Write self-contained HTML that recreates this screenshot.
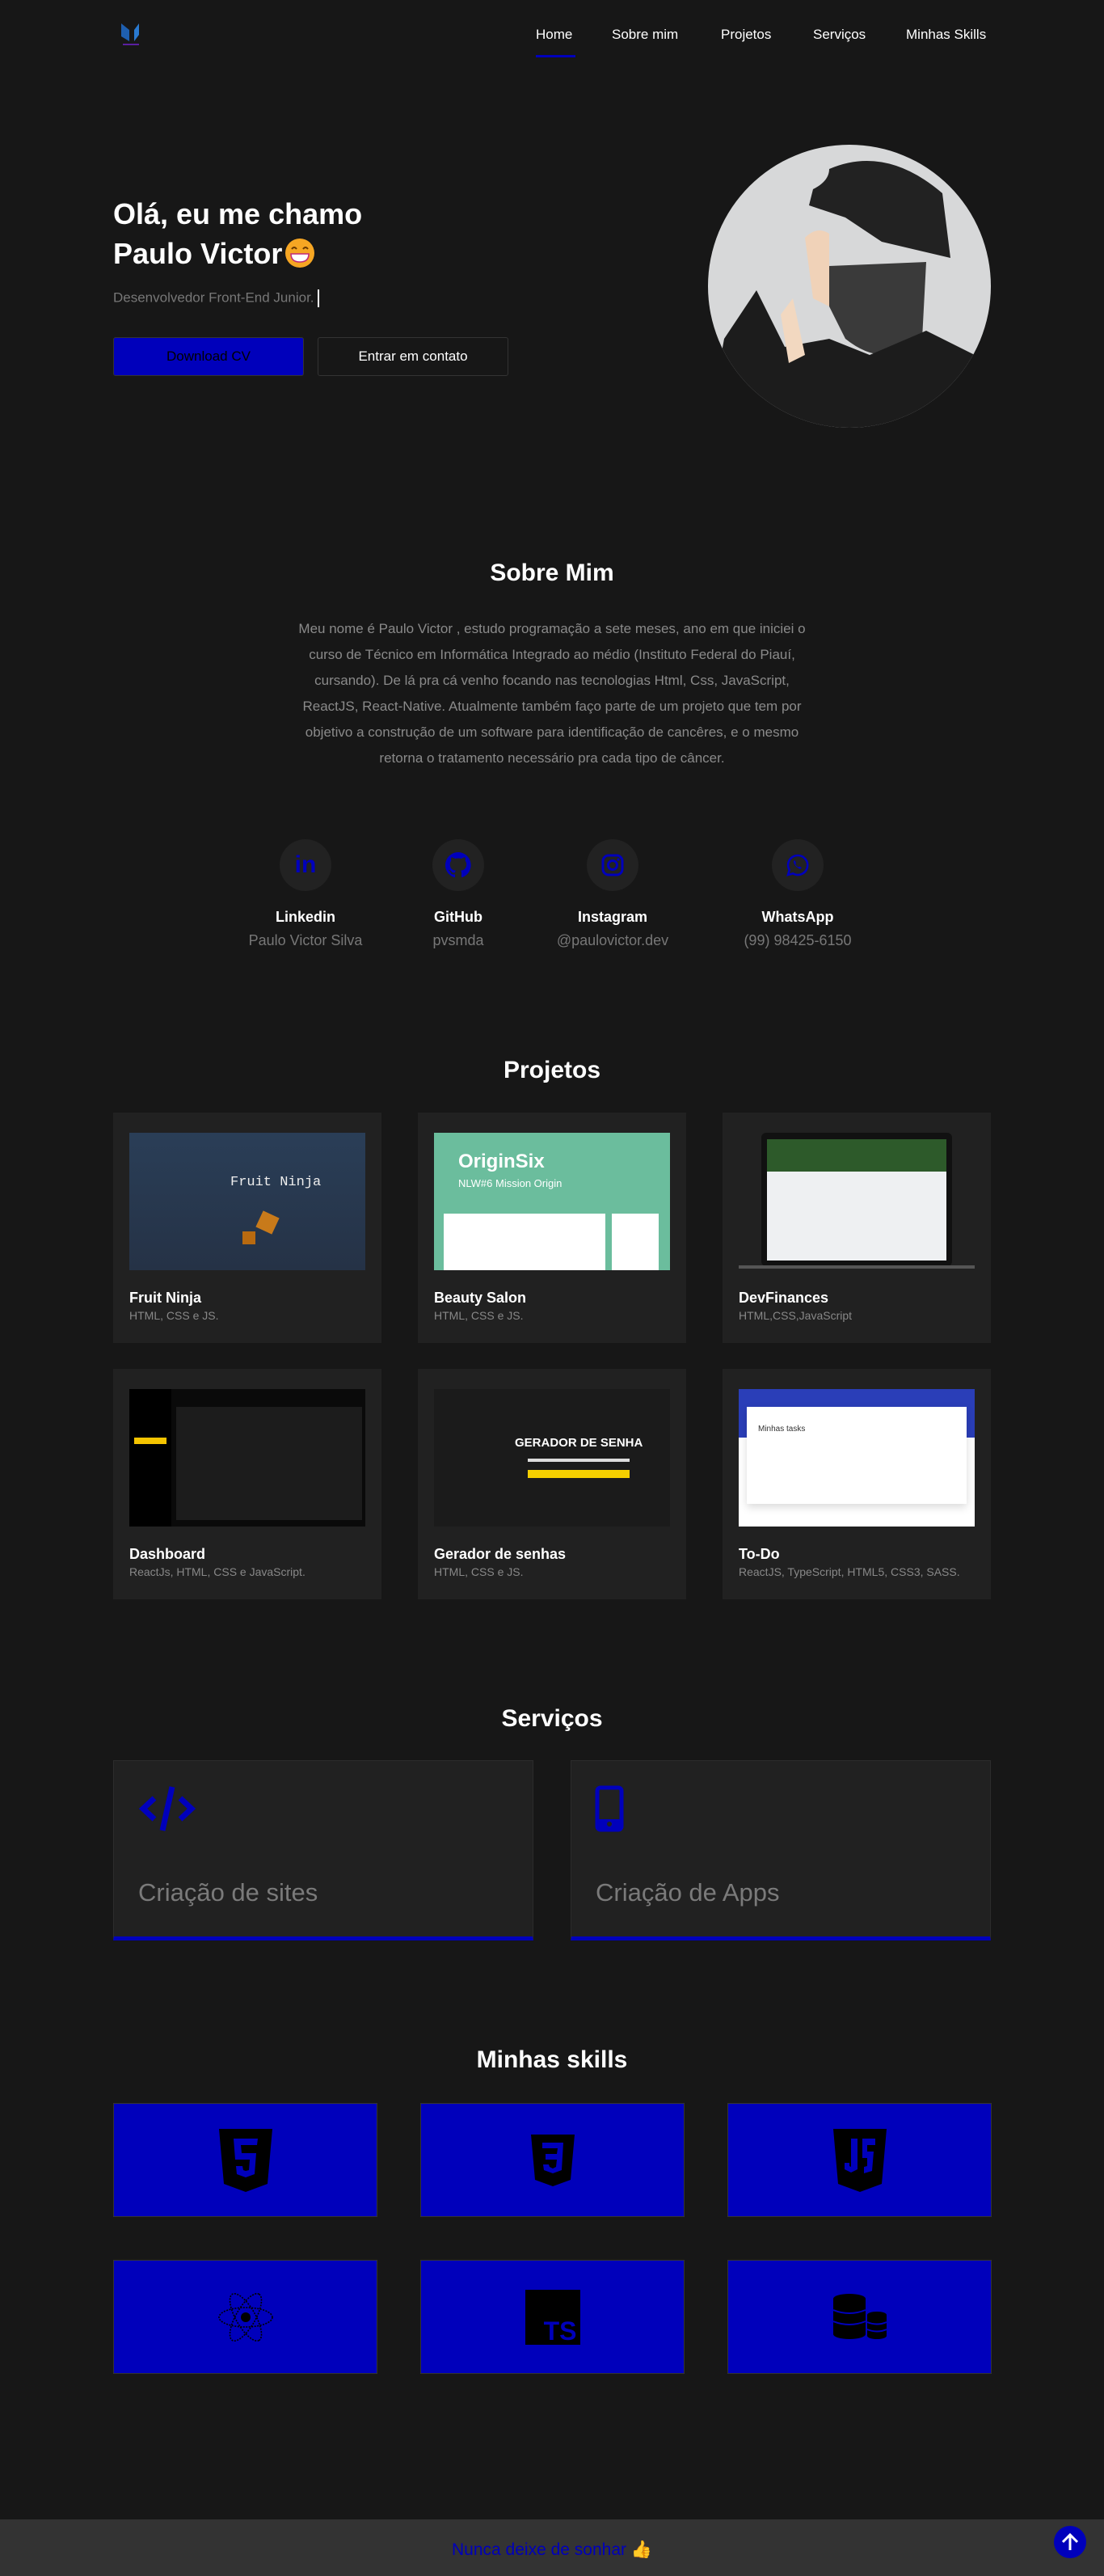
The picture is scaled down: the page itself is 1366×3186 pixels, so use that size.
<!DOCTYPE html>
<html><head><meta charset="utf-8">
<style>
*{margin:0;padding:0;box-sizing:border-box}
body{width:1366px;height:3186px;background:#171717;font-family:"Liberation Sans",sans-serif;color:#fff;position:relative;overflow:hidden}
.abs{position:absolute}
.nav a{position:absolute;top:33px;font-size:17px;color:#fff;text-decoration:none}
h2{position:absolute;left:0;width:1366px;text-align:center;font-size:30px;font-weight:bold}
.card{position:absolute;background:#212121;width:332px;height:285px}
.card .img{position:absolute;left:20px;top:25px;width:292px;height:170px;overflow:hidden}
.card .t{position:absolute;left:20px;top:219px;font-size:18px;font-weight:bold}
.card .s{position:absolute;left:20px;top:243px;font-size:14px;color:#888}
.soc{position:absolute;width:200px;text-align:center}
.soc .c{width:64px;height:64px;border-radius:50%;background:#222;margin:0 auto;display:flex;align-items:center;justify-content:center}
.soc .l{font-weight:bold;font-size:18px;margin-top:22px}
.soc .v{color:#777;font-size:18px;margin-top:8px}
.svc{position:absolute;top:2177px;width:520px;height:223px;background:#212121;border:1px solid #2c2c2c;border-bottom:5px solid #0000bb}
.svc .tx{position:absolute;left:30px;top:145px;font-size:31px;color:#7a7a7a}
.sk{position:absolute;width:327px;height:141px;background:#0000bb;border:1px solid #333;display:flex;align-items:center;justify-content:center}
</style></head><body>

<svg class="abs" style="left:148px;top:27px" width="30" height="32" viewBox="0 0 30 32"><path d="M2 2 L12 10 L12 24 L2 18Z" fill="#1e5fb0"/><path d="M24 2 L18 10 L18 24 L24 16Z" fill="#2a7ad0"/><rect x="4" y="27" width="20" height="2" fill="#5a1fa0"/></svg>
<div class="nav">
<a style="left:663px">Home</a>
<a style="left:757px">Sobre mim</a>
<a style="left:892px">Projetos</a>
<a style="left:1006px">Serviços</a>
<a style="left:1121px">Minhas Skills</a>
</div>
<div class="abs" style="left:663px;top:68px;width:49px;height:3px;background:#0000bb"></div>

<div class="abs" style="left:140px;top:240px;font-size:36px;font-weight:bold;line-height:49px">Olá, eu me chamo<br>Paulo Victor<svg width="38" height="38" viewBox="0 0 38 38" style="vertical-align:-6px;margin-left:3px"><circle cx="19" cy="19" r="18" fill="#f6a623"/><path d="M9 14q3-4 6 0M23 14q3-4 6 0" stroke="#6b3a00" stroke-width="2" fill="none"/><path d="M8 20h22q0 10-11 10T8 20z" fill="#fff" stroke="#c0287a" stroke-width="1.5"/></svg></div>
<div class="abs" style="left:140px;top:358px;font-size:17px;color:#777">Desenvolvedor Front-End Junior. <span style="display:inline-block;width:2px;height:22px;background:#fff;vertical-align:middle"></span></div>
<div class="abs" style="left:140px;top:417px;width:236px;height:48px;background:#0000bb;border:1px solid #333;border-radius:3px;color:#000;font-size:17px;text-align:center;line-height:46px">Download CV</div>
<div class="abs" style="left:393px;top:417px;width:236px;height:48px;border:1px solid #333;border-radius:3px;font-size:17px;text-align:center;line-height:46px">Entrar em contato</div>
<div class="abs" style="left:876px;top:179px;width:350px;height:350px;border-radius:50%;background:#d7d8d9;overflow:hidden">
 <svg width="350" height="350" viewBox="0 0 350 350"><path d="M150 30 Q220 0 290 60 L300 140 L215 120 L170 90 L125 75 L130 55 Q150 45 150 30Z" fill="#222"/><path d="M120 115 Q135 100 150 110 L150 200 L130 190Z" fill="#f0d2b8"/><path d="M150 150 L270 145 L265 240 Q220 280 170 240 L150 200Z" fill="#3a3a3a"/><path d="M0 350 L20 240 L60 180 L95 250 L150 240 L200 260 L270 230 L330 260 L350 350Z" fill="#1c1c1c"/><path d="M90 210 L105 190 L120 260 L100 270Z" fill="#f2d8c0"/></svg>
</div>

<h2 style="top:692px">Sobre Mim</h2>
<div class="abs" style="left:368px;top:762px;width:630px;text-align:center;font-size:17px;line-height:32px;color:#8a8a8a">Meu nome é Paulo Victor , estudo programação a sete meses, ano em que iniciei o curso de Técnico em Informática Integrado ao médio (Instituto Federal do Piauí, cursando). De lá pra cá venho focando nas tecnologias Html, Css, JavaScript, ReactJS, React-Native. Atualmente também faço parte de um projeto que tem por objetivo a construção de um software para identificação de cancêres, e o mesmo retorna o tratamento necessário pra cada tipo de câncer.</div>

<div class="soc" style="left:278px;top:1038px"><div class="c"><span style="color:#0000bb;font-weight:bold;font-size:30px">in</span></div><div class="l">Linkedin</div><div class="v">Paulo Victor Silva</div></div>
<div class="soc" style="left:467px;top:1038px"><div class="c"><svg width="32" height="32" viewBox="0 0 16 16"><path fill="#0000bb" d="M8 0a8 8 0 0 0-2.5 15.6c.4 0 .5-.2.5-.4v-1.5c-2.2.5-2.7-1-2.7-1-.4-.9-.9-1.2-.9-1.2-.7-.5.1-.5.1-.5.8.1 1.2.8 1.2.8.7 1.3 1.9.9 2.300.7.1-.5.3-.9.5-1.1-1.8-.2-3.6-.9-3.6-4 0-.9.3-1.6.8-2.1-.1-.2-.4-1 .1-2.1 0 0 .7-.2 2.2.8a7.5 7.5 0 0 1 4 0c1.5-1 2.2-.8 2.2-.8.4 1.1.2 1.9.1 2.1.5.6.8 1.3.8 2.1 0 3.1-1.9 3.8-3.6 4 .3.3.5.8.5 1.5v2.2c0 .2.1.5.6.4A8 8 0 0 0 8 0z"/></svg></div><div class="l">GitHub</div><div class="v">pvsmda</div></div>
<div class="soc" style="left:658px;top:1038px"><div class="c"><svg width="30" height="30" viewBox="0 0 30 30"><rect x="3" y="3" width="24" height="24" rx="7" fill="none" stroke="#0000bb" stroke-width="3"/><circle cx="15" cy="15" r="5.5" fill="none" stroke="#0000bb" stroke-width="3"/><circle cx="22" cy="8" r="1.6" fill="#0000bb"/></svg></div><div class="l">Instagram</div><div class="v">@paulovictor.dev</div></div>
<div class="soc" style="left:887px;top:1038px"><div class="c"><svg width="30" height="30" viewBox="0 0 30 30"><path d="M15 3a12 12 0 0 0-10.3 18L3 27l6.2-1.6A12 12 0 1 0 15 3z" fill="none" stroke="#0000bb" stroke-width="2.6"/><path d="M10 10q0 6 8 10l2-2-3-1.5-1 1q-3-1.5-4-4l1-1L11.5 9z" fill="#0000bb"/></svg></div><div class="l">WhatsApp</div><div class="v">(99) 98425-6150</div></div>

<h2 style="top:1307px">Projetos</h2>
<div class="card" style="left:140px;top:1376px"><div class="img" style="background:linear-gradient(180deg,#2a3e57,#253246)"><div class="abs" style="left:125px;top:52px;font-family:'Liberation Mono',monospace;font-size:17px;color:#eee">Fruit Ninja</div><div class="abs" style="left:160px;top:100px;width:22px;height:22px;background:#c87a1a;transform:rotate(25deg)"></div><div class="abs" style="left:140px;top:122px;width:16px;height:16px;background:#b86a10"></div></div><div class="t">Fruit Ninja</div><div class="s">HTML, CSS e JS.</div></div>
<div class="card" style="left:517px;top:1376px"><div class="img" style="background:#6bbd9d"><div class="abs" style="left:30px;top:22px;font-size:24px;font-weight:bold">OriginSix</div><div class="abs" style="left:30px;top:55px;font-size:13px">NLW#6 Mission Origin</div><div class="abs" style="left:12px;top:100px;width:200px;height:70px;background:#fff"></div><div class="abs" style="left:220px;top:100px;width:58px;height:70px;background:#fff"></div></div><div class="t">Beauty Salon</div><div class="s">HTML, CSS e JS.</div></div>
<div class="card" style="left:894px;top:1376px"><div class="img" style="background:#212121"><div class="abs" style="left:28px;top:0;width:236px;height:165px;background:#111;border-radius:6px"></div><div class="abs" style="left:35px;top:8px;width:222px;height:150px;background:#eef0f2"></div><div class="abs" style="left:35px;top:8px;width:222px;height:40px;background:#2d5a2a"></div><div class="abs" style="left:0;top:164px;width:292px;height:4px;background:#555"></div></div><div class="t">DevFinances</div><div class="s">HTML,CSS,JavaScript</div></div>
<div class="card" style="left:140px;top:1693px"><div class="img" style="background:#0a0a0a"><div class="abs" style="left:0;top:0;width:52px;height:170px;background:#000"></div><div class="abs" style="left:58px;top:22px;width:230px;height:140px;background:#1c1c1c"></div><div class="abs" style="left:6px;top:60px;width:40px;height:8px;background:#f5c400"></div></div><div class="t">Dashboard</div><div class="s">ReactJs, HTML, CSS e JavaScript.</div></div>
<div class="card" style="left:517px;top:1693px"><div class="img" style="background:#1b1b1b"><div class="abs" style="left:100px;top:58px;font-size:15px;font-weight:bold">GERADOR DE SENHA</div><div class="abs" style="left:116px;top:86px;width:126px;height:4px;background:#ddd"></div><div class="abs" style="left:116px;top:100px;width:126px;height:10px;background:#f5d000"></div></div><div class="t">Gerador de senhas</div><div class="s">HTML, CSS e JS.</div></div>
<div class="card" style="left:894px;top:1693px"><div class="img" style="background:#fff"><div class="abs" style="left:0;top:0;width:292px;height:60px;background:#2a3eb8"></div><div class="abs" style="left:10px;top:22px;width:272px;height:120px;background:#fff;box-shadow:0 4px 10px rgba(0,0,0,.15)"></div><div class="abs" style="left:24px;top:44px;font-size:10px;color:#333">Minhas tasks</div></div><div class="t">To-Do</div><div class="s">ReactJS, TypeScript, HTML5, CSS3, SASS.</div></div>

<h2 style="top:2109px">Serviços</h2>
<div class="svc" style="left:140px"><svg class="abs" style="left:30px;top:30px" width="72" height="58" viewBox="0 0 72 58"><path d="M20 16 L6 29 L20 42" fill="none" stroke="#0000bb" stroke-width="7"/><path d="M52 16 L66 29 L52 42" fill="none" stroke="#0000bb" stroke-width="7"/><path d="M42 2 L30 56" stroke="#0000bb" stroke-width="7"/></svg><div class="tx">Criação de sites</div></div>
<div class="svc" style="left:706px"><svg class="abs" style="left:29px;top:30px" width="36" height="58" viewBox="0 0 36 58"><rect x="3" y="3" width="30" height="52" rx="4" fill="none" stroke="#0000bb" stroke-width="5"/><rect x="3" y="42" width="30" height="12" fill="#0000bb"/><circle cx="18" cy="48" r="3" fill="#212121"/></svg><div class="tx">Criação de Apps</div></div>

<h2 style="top:2531px">Minhas skills</h2>
<div class="sk" style="left:140px;top:2601px"><svg width="66" height="78" viewBox="0 0 66 78"><path d="M0 0H66L60 68L33 78L6 68Z" fill="#000"/><path d="M18 12H48L47 20H27L28 30H46L44 56L33 60L22 56L21 46H29L30 51L33 52L37 51L38 38H20Z" fill="#0000bb"/></svg></div>
<div class="sk" style="left:520px;top:2601px"><svg width="54" height="64" viewBox="0 0 54 64"><path d="M0 0H54L49 56L27 64L5 56Z" fill="#000"/><path d="M14 10H40L38 44L27 48L16 44L15 37H22L23 40L27 42L31 40L32 31H18V24H32L33 17H14Z" fill="#0000bb"/></svg></div>
<div class="sk" style="left:900px;top:2601px"><svg width="66" height="78" viewBox="0 0 66 78"><path d="M0 0H66L60 68L33 78L6 68Z" fill="#000"/><path d="M22 12H30V50L22 54L14 50V42H20V46L22 47V12Z" fill="#0000bb"/><path d="M36 12H52V20H42V28H50L48 52L38 55V47L42 46V36H36Z" fill="#0000bb"/></svg></div>
<div class="sk" style="left:140px;top:2795px"><svg width="70" height="64" viewBox="-35 -32 70 64"><g fill="none" stroke="#000" stroke-width="1.6" stroke-dasharray="2 1.5"><ellipse rx="33" ry="12"/><ellipse rx="33" ry="12" transform="rotate(60)"/><ellipse rx="33" ry="12" transform="rotate(-60)"/></g><circle r="6" fill="#000"/></svg></div>
<div class="sk" style="left:520px;top:2795px"><div style="width:68px;height:68px;background:#000;position:relative"><span style="position:absolute;right:4px;bottom:-2px;font-size:32px;font-weight:bold;color:#0000bb">TS</span></div></div>
<div class="sk" style="left:900px;top:2795px"><svg width="66" height="58" viewBox="0 0 66 58"><g fill="#000"><ellipse cx="20" cy="6" rx="20" ry="6"/><rect x="0" y="6" width="40" height="44"/><ellipse cx="20" cy="50" rx="20" ry="6"/><ellipse cx="54" cy="26" rx="12" ry="4"/><rect x="42" y="26" width="24" height="26"/><ellipse cx="54" cy="52" rx="12" ry="4"/></g><g stroke="#0000bb" stroke-width="2" fill="none"><path d="M0 20Q20 28 40 20M0 34Q20 42 40 34M42 35Q54 40 66 35M42 44Q54 49 66 44"/></g></svg></div>

<div class="abs" style="left:0;top:3116px;width:1366px;height:70px;background:#333"></div>
<div class="abs" style="left:0;top:3141px;width:1366px;text-align:center;font-size:21px;color:#0000bb">Nunca deixe de sonhar <span style="font-family:'DejaVu Sans',sans-serif;color:#f5c400">👍</span></div>
<div class="abs" style="left:1304px;top:3124px;width:40px;height:40px;border-radius:50%;background:#0000bb"><svg width="40" height="40" viewBox="0 0 40 40"><path d="M20 30V11M11 20L20 11L29 20" fill="none" stroke="#fff" stroke-width="3"/></svg></div>
</body></html>
